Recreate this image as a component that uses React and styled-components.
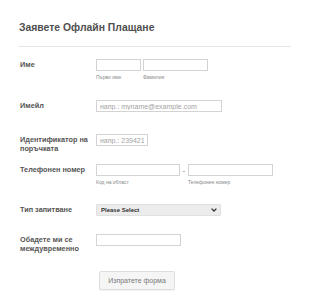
import styled, { createGlobalStyle } from "styled-components";

const GlobalStyle = createGlobalStyle`
  body {
    margin: 0;
    background: #fff;
    font-family: "Liberation Sans", Arial, sans-serif;
  }
`;

export default function App() {
  return (
    <>
      <GlobalStyle />
      <Page>
        <Header>
          <Title>Заявете Офлайн Плащане</Title>
        </Header>

        <Row $after={19}>
          <Label>Име</Label>
          <Fields>
            <Field>
              <Input $w={45} />
              <Sub>Първо име</Sub>
            </Field>
            <Field>
              <Input $w={65} />
              <Sub>Фамилия</Sub>
            </Field>
          </Fields>
        </Row>

        <Row $after={22}>
          <Label>Имейл</Label>
          <Input $w={126} placeholder="напр.: myname@example.com" />
        </Row>

        <Row $after={11}>
          <Label>Идентификатор на поръчката</Label>
          <Input $w={52} placeholder="напр.: 239421" />
        </Row>

        <Row $after={18}>
          <Label>Телефонен номер</Label>
          <Fields $gap={0}>
            <Field>
              <Input $w={84} />
              <Sub>Код на област</Sub>
            </Field>
            <Dash>-</Dash>
            <Field>
              <Input $w={85} />
              <Sub>Телефонен номер</Sub>
            </Field>
          </Fields>
        </Row>

        <Row $after={18}>
          <Label>Тип запитване</Label>
          <SelectWrap>
            <Select defaultValue="">
              <option value="">Please Select</option>
            </Select>
            <Chevron width="6" height="4" viewBox="0 0 6 4">
              <path d="M0.6 0.6 L3 3 L5.4 0.6" fill="none" stroke="#333" strokeWidth="1.3" />
            </Chevron>
          </SelectWrap>
        </Row>

        <Row $after={16}>
          <Label>Обадете ми се междувременно</Label>
          <Input $w={85} />
        </Row>

        <ButtonRow>
          <Button type="button">Изпратете форма</Button>
        </ButtonRow>
      </Page>
    </>
  );
}

const Page = styled.div`
  width: 310px;
  height: 308px;
  box-sizing: border-box;
  padding: 21px 19px 0 18px;
  overflow: hidden;
`;

const Header = styled.div`
  padding: 0 0 12px 1px;
  border-bottom: 1px solid #e6e6e6;
  margin-bottom: 12px;
`;

const Title = styled.h1`
  margin: 0;
  font-size: 10.4px;
  line-height: 13px;
  font-weight: 700;
  color: #4f4f4f;
`;

const Row = styled.div`
  display: flex;
  align-items: flex-start;
  margin-bottom: ${(p) => p.$after}px;
`;

const Label = styled.div`
  width: 70px;
  margin-right: 6px;
  padding: 2px 0 0 2px;
  font-size: 7.3px;
  line-height: 8.5px;
  font-weight: 700;
  color: #555;
`;

const Fields = styled.div`
  display: flex;
  gap: ${(p) => (p.$gap ?? 2)}px;
`;

const Field = styled.div`
  display: flex;
  flex-direction: column;
`;

const Input = styled.input`
  display: block;
  box-sizing: border-box;
  width: ${(p) => p.$w}px;
  height: 12px;
  margin: 0;
  padding: 0 3px;
  border: 1px solid #d3d3d3;
  border-radius: 0;
  background: #fff;
  font-family: inherit;
  font-size: 7px;
  color: #555;
  outline: none;

  &::placeholder {
    color: #a3a3a3;
  }
`;

const Sub = styled.span`
  margin-top: 3px;
  font-size: 5px;
  line-height: 7px;
  color: #8a8a8a;
`;

const Dash = styled.span`
  width: 8px;
  text-align: center;
  font-size: 7px;
  line-height: 14px;
  color: #777;
`;

const SelectWrap = styled.div`
  position: relative;
  width: 125px;
  height: 12px;
`;

const Select = styled.select`
  display: block;
  appearance: none;
  box-sizing: border-box;
  width: 100%;
  height: 12px;
  margin: 0;
  padding: 0 4px;
  border: 1px solid #e0e0e0;
  border-radius: 1px;
  background: #ececec;
  font-family: inherit;
  font-size: 6px;
  font-weight: 700;
  color: #333;
  outline: none;
`;

const Chevron = styled.svg`
  position: absolute;
  right: 4px;
  top: 4px;
  pointer-events: none;
`;

const ButtonRow = styled.div`
  padding-left: 81px;
`;

const Button = styled.button`
  width: 76px;
  height: 19px;
  padding: 0;
  border: 1px solid #dedede;
  border-radius: 2px;
  background: #f5f5f5;
  box-shadow: 0 1px 1px rgba(0, 0, 0, 0.06);
  font-family: inherit;
  font-size: 7px;
  color: #777;
`;
